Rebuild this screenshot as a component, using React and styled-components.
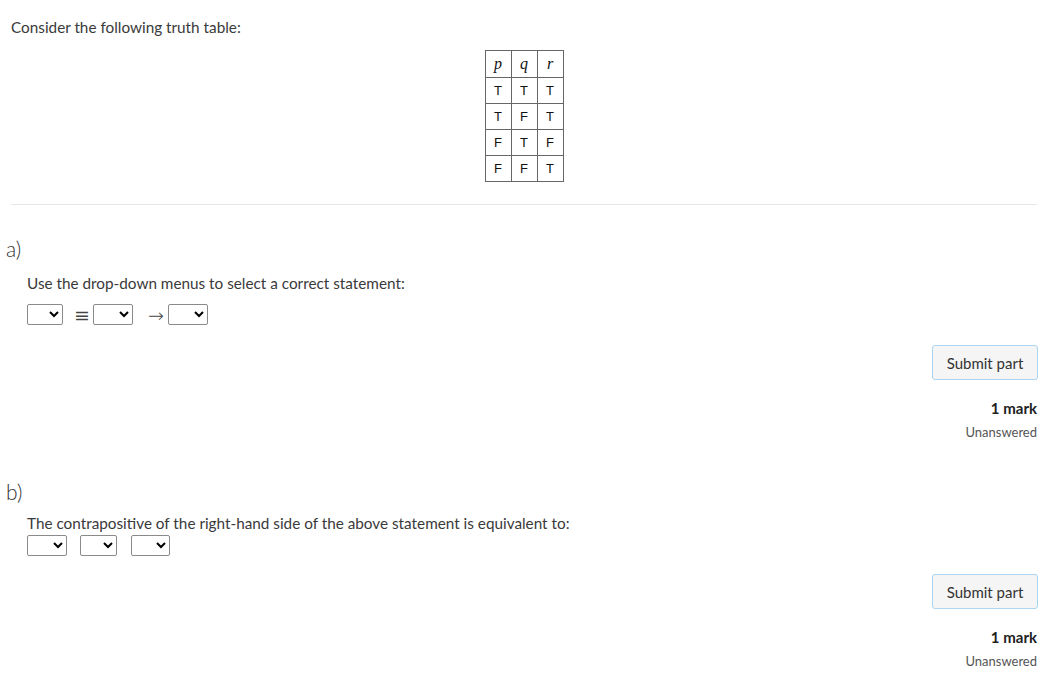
import React from "react";
import styled, { createGlobalStyle } from "styled-components";

const Global = createGlobalStyle`
  html, body { margin: 0; padding: 0; background: #fff; }
  body { font-family: Lato, "Noto Sans", sans-serif; color: #333; }
`;

const Page = styled.div`
  padding: 17px 23px 20px 6px;
`;

const Intro = styled.div`
  margin-left: 5px;
`;

const Text = styled.p`
  margin: 0;
  font-size: 15.3px;
  line-height: 20px;
  color: #3a3a3a;
`;

const TableWrap = styled.div`
  display: flex;
  justify-content: center;
  margin-top: 13px;
`;

const Truth = styled.table`
  border-collapse: collapse;
  border: 1px solid #222;
  font-family: "Liberation Sans", Arial, sans-serif;
  font-size: 13px;
  color: #111;
`;

const Cell = styled.td`
  border: 1px solid #666;
  width: 25px;
  height: ${(p) => (p.$head ? 26 : 25)}px;
  padding: 0;
  text-align: center;
  vertical-align: middle;
  font-family: ${(p) => (p.$head ? '"Liberation Serif", "DejaVu Serif", serif' : "inherit")};
  font-style: ${(p) => (p.$head ? "italic" : "normal")};
  font-size: ${(p) => (p.$head ? "16px" : "13px")};
`;

const Rule = styled.hr`
  margin: 22px 0 0 5px;
  border: 0;
  border-top: 1px solid #e6e6e6;
`;

const PartLabel = styled.div`
  font-size: 21px;
  font-weight: 300;
  line-height: 26px;
  color: #333;
  margin-top: ${(p) => p.$top}px;
`;

const PartBody = styled.div`
  padding-left: 21px;
  margin-top: ${(p) => p.$top}px;
`;

const SelectRow = styled.div`
  display: flex;
  align-items: center;
  margin-top: ${(p) => p.$top}px;
`;

const Select = styled.select`
  width: ${(p) => p.$w}px;
  height: 21px;
  margin: 0;
  margin-right: ${(p) => p.$gap || 0}px;
  font-size: 13px;
  border: 1px solid #8a8a8a;
  border-radius: 2px;
  background: #fff;
  box-sizing: border-box;
`;

const Op = styled.span`
  font-family: ${(p) => (p.$arrow ? '"DejaVu Sans", sans-serif' : '"DejaVu Serif", serif')};
  font-size: 19px;
  font-weight: ${(p) => (p.$arrow ? 300 : 400)};
  line-height: 20px;
  color: #444;
  width: ${(p) => p.$w}px;
  text-align: right;
  padding-right: ${(p) => (p.$arrow ? 4 : 3)}px;
  box-sizing: border-box;
`;

const Footer = styled.div`
  display: flex;
  flex-direction: column;
  align-items: flex-end;
  margin-top: ${(p) => p.$top}px;
`;

const SubmitButton = styled.button`
  font-family: Lato, "Noto Sans", sans-serif;
  font-size: 15px;
  color: #333;
  height: 35px;
  width: 106px;
  background: #f5f5f5;
  border: 1px solid #a9d5f1;
  border-radius: 3px;
  padding: 0;
  margin-right: -1px;
`;

const Marks = styled.div`
  font-size: 15px;
  font-weight: 700;
  color: #222;
  line-height: 20px;
  margin-top: 18px;
`;

const Status = styled.div`
  font-size: 13px;
  color: #555;
  line-height: 18px;
  margin-top: 5px;
`;

const rows = [
  ["T", "T", "T"],
  ["T", "F", "T"],
  ["F", "T", "F"],
  ["F", "F", "T"],
];

function PartFooter({ top }) {
  return (
    <Footer $top={top}>
      <SubmitButton>Submit part</SubmitButton>
      <Marks>1 mark</Marks>
      <Status>Unanswered</Status>
    </Footer>
  );
}

export default function App() {
  return (
    <>
      <Global />
      <Page>
        <Intro>
          <Text>Consider the following truth table:</Text>
          <TableWrap>
            <Truth>
              <tbody>
                <tr>
                  <Cell $head>p</Cell>
                  <Cell $head>q</Cell>
                  <Cell $head>r</Cell>
                </tr>
                {rows.map((r, i) => (
                  <tr key={i}>
                    {r.map((v, j) => (
                      <Cell key={j}>{v}</Cell>
                    ))}
                  </tr>
                ))}
              </tbody>
            </Truth>
          </TableWrap>
        </Intro>
        <Rule />

        <PartLabel $top={31}>a)</PartLabel>
        <PartBody $top={11}>
          <Text>Use the drop-down menus to select a correct statement:</Text>
          <SelectRow $top={11}>
            <Select $w={36} />
            <Op $w={30}>≡</Op>
            <Select $w={40} />
            <Op $w={35} $arrow>→</Op>
            <Select $w={40} />
          </SelectRow>
          <PartFooter top={20} />
        </PartBody>

        <PartLabel $top={38}>b)</PartLabel>
        <PartBody $top={8}>
          <Text>The contrapositive of the right-hand side of the above statement is equivalent to:</Text>
          <SelectRow $top={2}>
            <Select $w={40} $gap={13} />
            <Select $w={37} $gap={14} />
            <Select $w={39} />
          </SelectRow>
          <PartFooter top={18} />
        </PartBody>
      </Page>
    </>
  );
}
